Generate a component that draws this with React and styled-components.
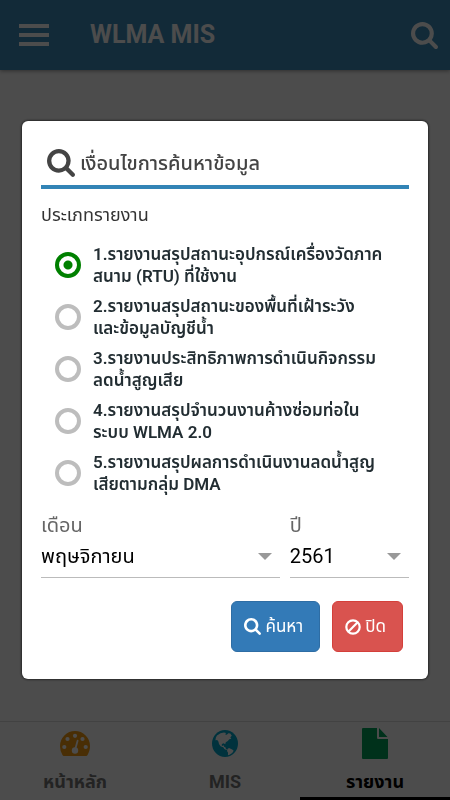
import React, { useState } from 'react'
import styled, { createGlobalStyle } from 'styled-components'

const REPORTS = [
  ['1.รายงานสรุปสถานะอุปกรณ์เครื่องวัดภาค', 'สนาม (RTU) ที่ใช้งาน'],
  ['2.รายงานสรุปสถานะของพื้นที่เฝ้าระวัง', 'และข้อมูลบัญชีน้ำ'],
  ['3.รายงานประสิทธิภาพการดำเนินกิจกรรม', 'ลดน้ำสูญเสีย'],
  ['4.รายงานสรุปจำนวนงานค้างซ่อมท่อใน', 'ระบบ WLMA 2.0'],
  ['5.รายงานสรุปผลการดำเนินงานลดน้ำสูญ', 'เสียตามกลุ่ม DMA'],
]

function SearchIcon({ size }) {
  return (
    <svg width={size} height={size} viewBox="0 128 1664 1664" aria-hidden="true">
      <path
        fill="currentColor"
        d="M1152 832q0-185-131.500-316.500t-316.500-131.500-316.500 131.500-131.500 316.500 131.500 316.500 316.500 131.500 316.500-131.500 131.500-316.500zM1664 1664q0 52-38 90t-90 38q-54 0-90-38l-343-342q-179 124-399 124-143 0-273.500-55.500t-225-150-150-225-55.500-273.500 55.500-273.500 150-225 225-150 273.500-55.500 273.500 55.500 225 150 150 225 55.500 273.500q0 220-124 399l343 343q37 37 37 90z"
      />
    </svg>
  )
}

function MenuIcon() {
  return (
    <svg width="30" height="22" viewBox="0 0 30 22" aria-hidden="true">
      <path fill="currentColor" d="M0 0h30v4H0zM0 9h30v4H0zM0 18h30v4H0z" />
    </svg>
  )
}

function BanIcon() {
  return (
    <svg width="16" height="16" viewBox="0 0 16 16" aria-hidden="true">
      <g fill="none" stroke="currentColor" strokeWidth="2.2">
        <circle cx="8" cy="8" r="6.7" />
        <path d="M3.3 12.7l9.4-9.4" />
      </g>
    </svg>
  )
}

function GaugeIcon() {
  return (
    <svg width="30" height="25" viewBox="0 0 30 25" aria-hidden="true">
      <path fill="#f39c12" d="M15 0a15 15 0 0 1 15 15c0 3.400-.9 6.500-2.600 9.200-.3.500-.6.800-1.200.8H3.800c-.6 0-.9-.3-1.200-.8A17 17 0 0 1 0 15 15 15 0 0 1 15 0z" />
      <g fill="#fff">
        <circle cx="4.300" cy="16" r="2.100" />
        <circle cx="7.500" cy="8" r="2.100" />
        <circle cx="15" cy="4.800" r="2.100" />
        <circle cx="22.500" cy="8" r="2.100" />
        <circle cx="25.700" cy="16" r="2.100" />
        <circle cx="15" cy="19.500" r="3.200" />
      </g>
      <path stroke="#fff" strokeWidth="1.800" strokeLinecap="round" d="M15.300 18l2.300-8.300" />
    </svg>
  )
}

function GlobeIcon() {
  return (
    <svg width="26" height="27" viewBox="0 0 26 27" aria-hidden="true">
      <ellipse cx="13" cy="13.500" rx="13" ry="13.500" fill="#00a8cc" />
      <g fill="#fff">
        <path d="M5 5.500l3.500-2.200 3.500-.9 2 .6-.8 1.500 1.600.3 1.500-1.500 2 .3 1.500 2.200-1.500 1.500 1 1.500-2 .5-1.500 1.700-2 1.200-.6 2.100-1.500-1-1.800.7-.2 1.600 1.400.3.800-.8.200 1.700 1.500.6.300 1.500 1.500.8-1 .4-2-1.200-1.100-1.600-2.700-1-1.600-2.300-.6-2.600-1.200-1.400-1.800.2.500-2.800z" />
        <path d="M15.500 19l1.500-1 3.200 1.400 1.500 1.300-1.500 2.300-2.700 1.700-1.600.6.200-2.600-1.100-1.800z" />
      </g>
    </svg>
  )
}

function FileIcon() {
  return (
    <svg width="26" height="31" viewBox="0 0 26 31" aria-hidden="true">
      <path fill="#00a65a" d="M1 0h14v9.500c0 1 .5 1.500 1.500 1.500H26v19a1 1 0 0 1-1 1H1a1 1 0 0 1-1-1V1a1 1 0 0 1 1-1zM17 0l8.500 9H17z" />
    </svg>
  )
}

export default function App() {
  const [report, setReport] = useState(0)

  return (
    <>
      <GlobalStyle />
      <Page>
        <Header>
          <IconButton aria-label="Menu">
            <MenuIcon />
          </IconButton>
          <AppTitle>WLMA MIS</AppTitle>
          <IconButton aria-label="Search">
            <SearchIcon size={27} />
          </IconButton>
        </Header>
        <Content />
        <TabBar>
          <Tab href="#home">
            <TabIcon><GaugeIcon /></TabIcon>
            หน้าหลัก
          </Tab>
          <Tab href="#mis">
            <TabIcon><GlobeIcon /></TabIcon>
            MIS
          </Tab>
          <Tab href="#report" $active>
            <TabIcon><FileIcon /></TabIcon>
            รายงาน
          </Tab>
        </TabBar>
      </Page>
      <Overlay>
        <Dialog role="dialog" aria-modal="true" aria-labelledby="dialog-title">
          <DialogTitle id="dialog-title">
            <SearchIcon size={28} />
            เงื่อนไขการค้นหาข้อมูล
          </DialogTitle>
          <ReportGroup>
            <Legend>ประเภทรายงาน</Legend>
            {REPORTS.map(([first, second], i) => (
              <Option key={first}>
                <Radio name="report" checked={report === i} onChange={() => setReport(i)} />
                <span>
                  {first}
                  <br />
                  {second}
                </span>
              </Option>
            ))}
          </ReportGroup>
          <Fields>
            <Field>
              <FieldLabel htmlFor="month">เดือน</FieldLabel>
              <SelectBox>
                <Select id="month">
                  <option>พฤษจิกายน</option>
                </Select>
              </SelectBox>
            </Field>
            <Field>
              <FieldLabel htmlFor="year">ปี</FieldLabel>
              <SelectBox>
                <Select id="year">
                  <option>2561</option>
                </Select>
              </SelectBox>
            </Field>
          </Fields>
          <Actions>
            <Button $color="#337ab7" $border="#2e6da4">
              <SearchIcon size={17} />
              ค้นหา
            </Button>
            <Button $color="#d9534f" $border="#d43f3a">
              <BanIcon />
              ปิด
            </Button>
          </Actions>
        </Dialog>
      </Overlay>
    </>
  )
}

const GlobalStyle = createGlobalStyle`
  * {
    box-sizing: border-box;
  }

  body {
    margin: 0;
    background: #fff;
    font-family: Roboto, 'Noto Sans Thai', 'Noto Sans', sans-serif;
  }

  button, select {
    font-family: inherit;
  }
`

const Page = styled.div`
  display: flex;
  flex-direction: column;
  min-height: 100vh;
`

const Header = styled.header`
  display: flex;
  align-items: center;
  height: 70px;
  padding: 0 12px 0 19px;
  background: #3c8dbc;
  color: #fff;
  box-shadow: 0 1px 4px rgba(0, 0, 0, 0.4);
`

const IconButton = styled.button`
  display: flex;
  padding: 0;
  border: 0;
  background: none;
  color: inherit;
`

const AppTitle = styled.h1`
  flex: 1;
  margin: 0 0 0 41px;
  font-size: 25px;
  line-height: 32px;
  font-weight: 700;
`

const Content = styled.main`
  flex: 1;
`

const TabBar = styled.nav`
  display: flex;
  border-top: 1px solid #ddd;
`

const Tab = styled.a`
  display: flex;
  flex: 1 1 0;
  flex-direction: column;
  align-items: center;
  border-bottom: 3px solid ${({ $active }) => ($active ? '#000' : 'transparent')};
  color: ${({ $active }) => ($active ? '#000' : '#777')};
  font-size: 18px;
  font-weight: 700;
  line-height: 30px;
  text-decoration: none;
`

const TabIcon = styled.span`
  display: flex;
  align-items: center;
  height: 42px;
  margin-bottom: 3px;
`

const Overlay = styled.div`
  position: fixed;
  inset: 0;
  display: flex;
  align-items: center;
  justify-content: center;
  padding: 0 22px;
  background: rgba(0, 0, 0, 0.7);
`

const Dialog = styled.section`
  width: 100%;
  padding: 24px 19px 27px;
  border-radius: 6px;
  background: #fff;
  box-shadow: 0 0 3px #000;
`

const DialogTitle = styled.h2`
  display: flex;
  align-items: center;
  gap: 5px;
  height: 44px;
  margin: 0 0 12px;
  padding: 0 6px 4px;
  border-bottom: 4px solid #3284b6;
  color: #444;
  font-size: 20px;
  line-height: 32px;
  font-weight: 500;
`

const ReportGroup = styled.fieldset`
  display: flex;
  flex-direction: column;
  gap: 8px;
  margin: 0;
  padding: 0;
  border: 0;
`

const Legend = styled.legend`
  margin-bottom: 14px;
  padding: 0;
  color: #333;
  font-size: 18px;
  line-height: 28px;
`

const Option = styled.label`
  display: flex;
  align-items: center;
  gap: 12px;
  padding-left: 14px;
  color: #222d32;
  font-size: 17px;
  font-weight: 600;
  line-height: 22px;
  white-space: nowrap;
`

const Radio = styled.input.attrs({ type: 'radio' })`
  flex: none;
  width: 26px;
  height: 26px;
  margin: 0;
  appearance: none;
  border: 4px solid #bdbdbd;
  border-radius: 50%;

  &:checked {
    border-color: #008000;
    background: radial-gradient(#008000 4px, transparent 5px);
  }
`

const Fields = styled.div`
  display: grid;
  grid-template-columns: 2fr 1fr;
  gap: 10px;
  margin-top: 16px;
`

const Field = styled.div`
  border-bottom: 1px solid #bbb;
`

const FieldLabel = styled.label`
  display: block;
  color: #666;
  font-size: 20px;
  line-height: 28px;
`

const SelectBox = styled.div`
  display: flex;
  align-items: center;
  padding: 0 8px 4px 0;

  &::after {
    content: '';
    border: 7px solid transparent;
    border-top-color: #999;
    border-bottom: 0;
  }
`

const Select = styled.select`
  flex: 1;
  min-width: 0;
  height: 34px;
  padding: 0;
  appearance: none;
  border: 0;
  background: none;
  color: #000;
  font-size: 20px;
`

const Actions = styled.div`
  display: flex;
  justify-content: flex-end;
  gap: 12px;
  margin-top: 23px;
  padding-right: 6px;
`

const Button = styled.button`
  display: flex;
  align-items: center;
  gap: 4px;
  height: 51px;
  padding: 0 16px 0 12px;
  border: 1px solid ${({ $border }) => $border};
  border-radius: 6px;
  background: ${({ $color }) => $color};
  color: #fff;
  font-size: 17px;
`
